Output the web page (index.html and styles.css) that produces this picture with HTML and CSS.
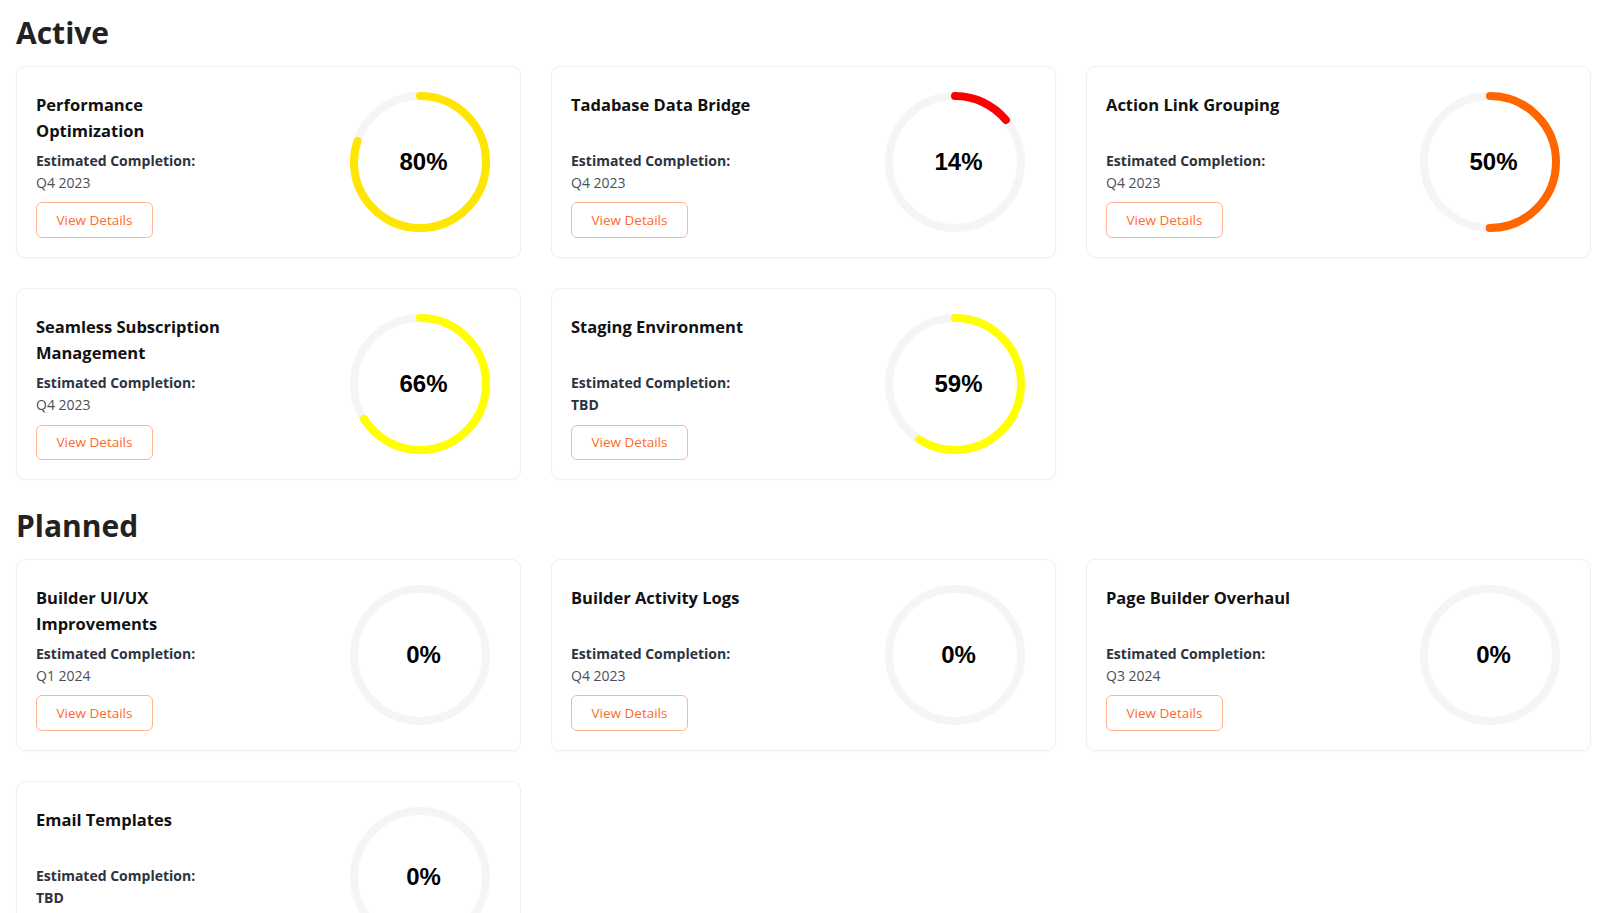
FILE: index.html
```html
<!DOCTYPE html>
<html lang="en">
<head>
<meta charset="utf-8">
<title>Roadmap</title>
<link rel="stylesheet" href="styles.css">
</head>
<body>
<main class="page">
  <section class="section">
    <h2 class="section-title">Active</h2>
    <div class="grid">
      <article class="card">
        <div class="info">
          <h3 class="title">Performance Optimization</h3>
          <div class="label">Estimated Completion:</div>
          <div class="date">Q4 2023</div>
          <button class="btn">View Details</button>
        </div>
        <div class="ring">
          <svg class="ring-svg" viewBox="0 0 140 140" width="140" height="140">
            <circle class="track" cx="70" cy="70" r="66"/>
            <circle class="bar" cx="70" cy="70" r="66" stroke="#ffe600" stroke-dasharray="331.75 414.69"/>
          </svg>
          <span class="pct">80%</span>
        </div>
      </article>
      <article class="card">
        <div class="info">
          <h3 class="title">Tadabase Data Bridge</h3>
          <div class="label">Estimated Completion:</div>
          <div class="date">Q4 2023</div>
          <button class="btn">View Details</button>
        </div>
        <div class="ring">
          <svg class="ring-svg" viewBox="0 0 140 140" width="140" height="140">
            <circle class="track" cx="70" cy="70" r="66"/>
            <circle class="bar" cx="70" cy="70" r="66" stroke="#ff0000" stroke-dasharray="58.06 414.69"/>
          </svg>
          <span class="pct">14%</span>
        </div>
      </article>
      <article class="card">
        <div class="info">
          <h3 class="title">Action Link Grouping</h3>
          <div class="label">Estimated Completion:</div>
          <div class="date">Q4 2023</div>
          <button class="btn">View Details</button>
        </div>
        <div class="ring">
          <svg class="ring-svg" viewBox="0 0 140 140" width="140" height="140">
            <circle class="track" cx="70" cy="70" r="66"/>
            <circle class="bar" cx="70" cy="70" r="66" stroke="#ff6600" stroke-dasharray="207.35 414.69"/>
          </svg>
          <span class="pct">50%</span>
        </div>
      </article>
      <article class="card">
        <div class="info">
          <h3 class="title">Seamless Subscription Management</h3>
          <div class="label">Estimated Completion:</div>
          <div class="date">Q4 2023</div>
          <button class="btn">View Details</button>
        </div>
        <div class="ring">
          <svg class="ring-svg" viewBox="0 0 140 140" width="140" height="140">
            <circle class="track" cx="70" cy="70" r="66"/>
            <circle class="bar" cx="70" cy="70" r="66" stroke="#ffff00" stroke-dasharray="273.70 414.69"/>
          </svg>
          <span class="pct">66%</span>
        </div>
      </article>
      <article class="card">
        <div class="info">
          <h3 class="title">Staging Environment</h3>
          <div class="label">Estimated Completion:</div>
          <div class="date date-tbd">TBD</div>
          <button class="btn">View Details</button>
        </div>
        <div class="ring">
          <svg class="ring-svg" viewBox="0 0 140 140" width="140" height="140">
            <circle class="track" cx="70" cy="70" r="66"/>
            <circle class="bar" cx="70" cy="70" r="66" stroke="#ffff00" stroke-dasharray="244.67 414.69"/>
          </svg>
          <span class="pct">59%</span>
        </div>
      </article>
    </div>
  </section>

  <section class="section">
    <h2 class="section-title">Planned</h2>
    <div class="grid">
      <article class="card">
        <div class="info">
          <h3 class="title">Builder UI/UX Improvements</h3>
          <div class="label">Estimated Completion:</div>
          <div class="date">Q1 2024</div>
          <button class="btn">View Details</button>
        </div>
        <div class="ring">
          <svg class="ring-svg" viewBox="0 0 140 140" width="140" height="140">
            <circle class="track" cx="70" cy="70" r="66"/>
          </svg>
          <span class="pct">0%</span>
        </div>
      </article>
      <article class="card">
        <div class="info">
          <h3 class="title">Builder Activity Logs</h3>
          <div class="label">Estimated Completion:</div>
          <div class="date">Q4 2023</div>
          <button class="btn">View Details</button>
        </div>
        <div class="ring">
          <svg class="ring-svg" viewBox="0 0 140 140" width="140" height="140">
            <circle class="track" cx="70" cy="70" r="66"/>
          </svg>
          <span class="pct">0%</span>
        </div>
      </article>
      <article class="card">
        <div class="info">
          <h3 class="title">Page Builder Overhaul</h3>
          <div class="label">Estimated Completion:</div>
          <div class="date">Q3 2024</div>
          <button class="btn">View Details</button>
        </div>
        <div class="ring">
          <svg class="ring-svg" viewBox="0 0 140 140" width="140" height="140">
            <circle class="track" cx="70" cy="70" r="66"/>
          </svg>
          <span class="pct">0%</span>
        </div>
      </article>
      <article class="card">
        <div class="info">
          <h3 class="title">Email Templates</h3>
          <div class="label">Estimated Completion:</div>
          <div class="date date-tbd">TBD</div>
          <button class="btn">View Details</button>
        </div>
        <div class="ring">
          <svg class="ring-svg" viewBox="0 0 140 140" width="140" height="140">
            <circle class="track" cx="70" cy="70" r="66"/>
          </svg>
          <span class="pct">0%</span>
        </div>
      </article>
    </div>
  </section>
</main>
</body>
</html>
```

FILE: styles.css
```css
* {
  box-sizing: border-box;
}

html, body {
  margin: 0;
  padding: 0;
  background: #ffffff;
}

body {
  font-family: "Open Sans", "Noto Sans", sans-serif;
  color: #1a1a1a;
}

.page {
  padding: 0 9px 0 16px;
}

.section {
  padding-bottom: 13px;
}

.section-title {
  margin: 15px 0 14.6px;
  font-size: 30px;
  line-height: 36px;
  font-weight: 700;
  color: #222222;
}

.grid {
  display: grid;
  grid-template-columns: repeat(3, 1fr);
  gap: 30px;
}

.card {
  display: flex;
  justify-content: space-between;
  align-items: flex-start;
  padding: 25px 30px 19px 19px;
  border: 1px solid #f0f0f0;
  border-radius: 9px;
  background: #ffffff;
  box-shadow: 0 1px 2px rgba(0, 0, 0, 0.02);
}

.info {
  width: 205px;
  display: flex;
  flex-direction: column;
  align-items: flex-start;
}

.title {
  margin: 0 0 6px;
  min-height: 52px;
  font-size: 16.5px;
  line-height: 26px;
  font-weight: 700;
  color: #111111;
}

.label {
  font-size: 14px;
  line-height: 22.4px;
  font-weight: 700;
  color: #2d3340;
}

.date {
  font-size: 14px;
  line-height: 22.4px;
  color: #4a4f58;
}

.date-tbd {
  font-weight: 700;
  color: #2d3340;
}

.btn {
  margin-top: 8px;
  padding: 5.5px 19.5px;
  font-family: inherit;
  font-size: 13.5px;
  line-height: 22.4px;
  color: #ff6a2c;
  background: #ffffff;
  border: 1px solid #ffb48f;
  border-radius: 6px;
  cursor: pointer;
}

.ring {
  position: relative;
  width: 140px;
  height: 140px;
  flex-shrink: 0;
}

.ring-svg {
  display: block;
  transform: rotate(-90deg);
}

.track {
  fill: none;
  stroke: #f5f5f5;
  stroke-width: 8;
}

.bar {
  fill: none;
  stroke-width: 8;
  stroke-linecap: round;
}

.pct {
  position: absolute;
  inset: 0;
  display: flex;
  align-items: center;
  justify-content: center;
  padding-left: 7px;
  font-family: "Liberation Sans", Arial, sans-serif;
  font-size: 24px;
  font-weight: 700;
  color: #000000;
}
```
